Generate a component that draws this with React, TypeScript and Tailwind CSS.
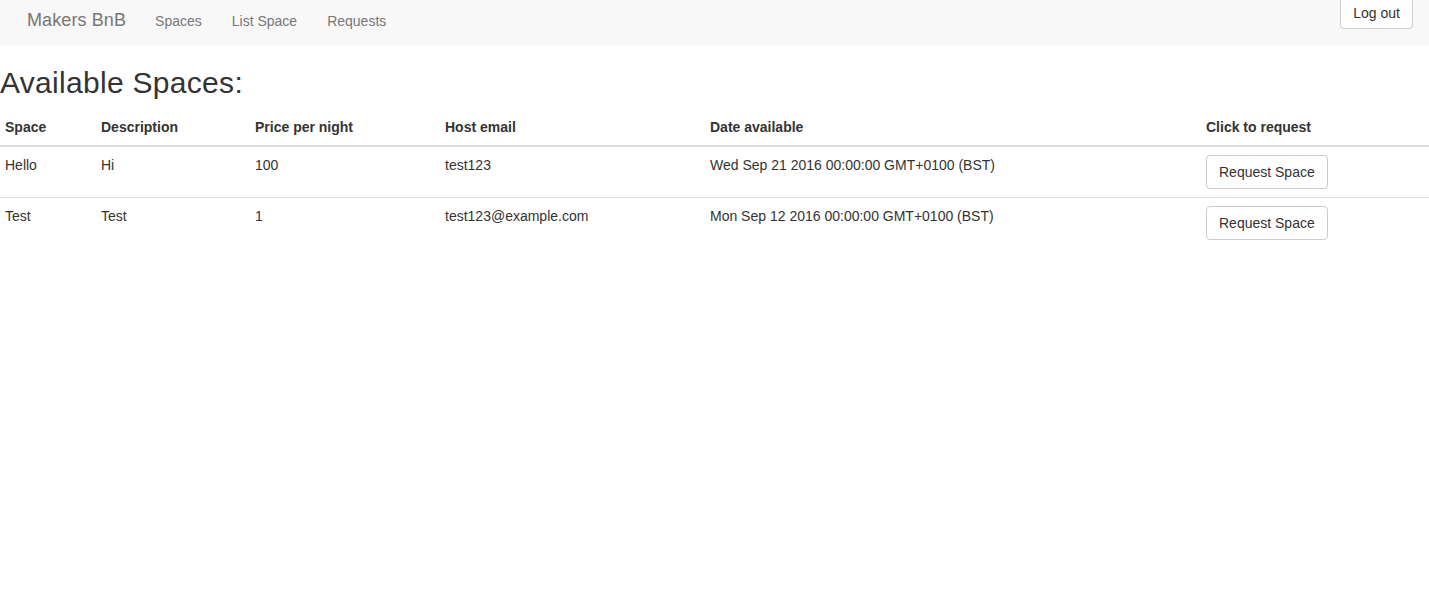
const spaces = [
  { name: "Hello", desc: "Hi", price: "100", host: "test123", date: "Wed Sep 21 2016 00:00:00 GMT+0100 (BST)" },
  { name: "Test", desc: "Test", price: "1", host: "test123@example.com", date: "Mon Sep 12 2016 00:00:00 GMT+0100 (BST)" },
];

const headers = ["Space", "Description", "Price per night", "Host email", "Date available", "Click to request"];
const widths = ["w-[96px]", "w-[154px]", "w-[190px]", "w-[265px]", "w-[496px]", ""];

export default function App() {
  return (
    <div className="min-h-[591px] bg-white font-['Liberation_Sans',Arial,sans-serif] text-[14px] leading-[20px] text-[#333]">
      {/* navbar */}
      <nav className="flex h-[45px] items-start bg-[#f8f8f8]">
        <a className="ml-[27px] mt-[10px] text-[18px] leading-[20px] tracking-[0.1px] text-[#777]">Makers BnB</a>
        <ul className="ml-[14px] mt-[11px] flex">
          {["Spaces", "List Space", "Requests"].map((l) => (
            <li key={l} className="px-[15px] text-[#777]">{l}</li>
          ))}
        </ul>
        <button className="ml-auto mr-[16px] -mt-[4px] h-[33px] rounded-[4px] border border-[#ccc] bg-white px-[12px] text-[14px] text-[#333]">
          Log out
        </button>
      </nav>

      <h2 className="mt-[21px] mb-[10px] text-[30px] leading-[33px] font-medium tracking-[0.3px] text-[#333]">Available Spaces:</h2>

      <table className="w-full border-collapse">
        <thead>
          <tr>
            {headers.map((h, i) => (
              <th key={h} className={`${widths[i]} border-b-2 border-[#ddd] px-[5px] py-[8px] text-left font-bold`}>
                {h}
              </th>
            ))}
          </tr>
        </thead>
        <tbody>
          {spaces.map((s, i) => (
            <tr key={s.name} className={i > 0 ? "border-t border-[#ddd]" : ""}>
              <td className="px-[5px] py-[8px] align-top">{s.name}</td>
              <td className="px-[5px] py-[8px] align-top">{s.desc}</td>
              <td className="px-[5px] py-[8px] align-top">{s.price}</td>
              <td className="px-[5px] py-[8px] align-top">{s.host}</td>
              <td className="px-[5px] py-[8px] align-top">{s.date}</td>
              <td className="px-[5px] py-[8px] align-top">
                <button className="h-[34px] rounded-[4px] border border-[#ccc] bg-white px-[12px] text-[14px] text-[#333]">
                  Request Space
                </button>
              </td>
            </tr>
          ))}
        </tbody>
      </table>
    </div>
  );
}
